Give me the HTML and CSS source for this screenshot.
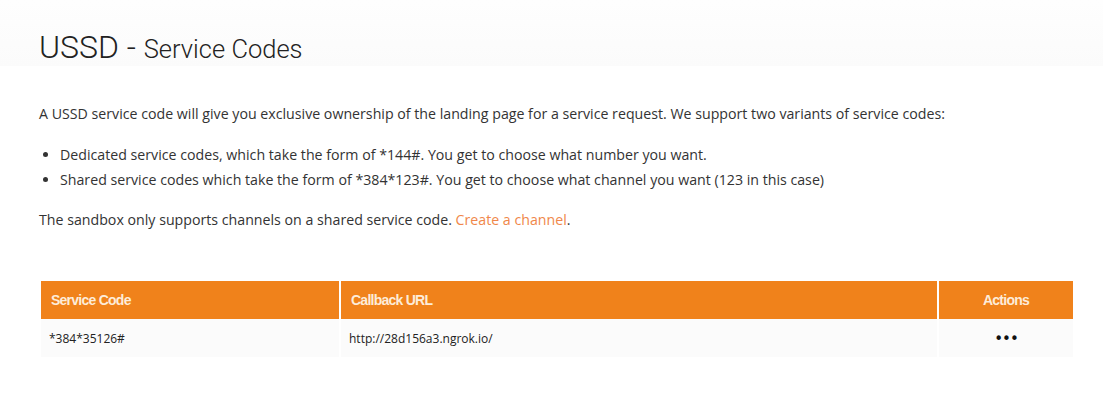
FILE: index.html
```html
<!DOCTYPE html>
<html>
<head>
<meta charset="utf-8">
<link rel="stylesheet" href="styles.css">
</head>
<body>
<div class="top">
  <h1 class="title"><span class="big">USSD - </span>Service Codes</h1>
</div>
<div class="content">
  <p class="intro">A USSD service code will give you exclusive ownership of the landing page for a service request. We support two variants of service codes:</p>
  <ul class="list">
    <li>Dedicated service codes, which take the form of *144#. You get to choose what number you want.</li>
    <li>Shared service codes which take the form of *384*123#. You get to choose what channel you want (123 in this case)</li>
  </ul>
  <p class="note">The sandbox only supports channels on a shared service code. <a class="link" href="#">Create a channel</a>.</p>

  <div class="table">
    <div class="thead">
      <div class="th c1">Service Code</div>
      <div class="th c2">Callback URL</div>
      <div class="th c3">Actions</div>
    </div>
    <div class="trow">
      <div class="td c1">*384*35126#</div>
      <div class="td c2">http://28d156a3.ngrok.io/</div>
      <div class="td c3"><span class="dots">&bull;&bull;&bull;</span></div>
    </div>
  </div>
</div>
</body>
</html>
```
FILE: styles.css
```css
html, body {
  margin: 0;
  padding: 0;
  background: #ffffff;
}
body {
  font-family: "Open Sans", "Noto Sans", sans-serif;
  color: #333333;
}
.top {
  height: 66px;
  background: linear-gradient(#fefefe, #fbfbfb);
  padding: 0 0 0 39px;
  box-sizing: border-box;
}
.title {
  margin: 0;
  padding-top: 29px;
  font-family: Roboto, sans-serif;
  font-weight: 300;
  font-size: 25.5px;
  line-height: 36px;
  color: #222;
}
.title .big {
  font-size: 32px;
}
.content {
  padding: 0 30px 0 39px;
}
.intro {
  margin: 0;
  padding-top: 35px;
  font-size: 14.2px;
  line-height: 25px;
}
.list {
  margin: 16px 0 0 0;
  padding-left: 21px;
  font-size: 14.2px;
  line-height: 25px;
}
.note {
  margin: 15px 0 0 0;
  font-size: 14.2px;
  line-height: 25px;
}
.link {
  color: #f0874a;
  text-decoration: none;
}
.table {
  margin-top: 49px;
  width: 1032px;
  margin-left: 2px;
}
.thead {
  display: flex;
  gap: 2px;
}
.th {
  background: #f0821b;
  color: #fdecd9;
  height: 38px;
  line-height: 38px;
  font-family: "Liberation Sans", Arial, sans-serif;
  font-weight: bold;
  font-size: 14px;
  letter-spacing: -0.75px;
  padding-left: 10px;
  box-sizing: border-box;
}
.c1 { width: 298px; }
.c2 { width: 596px; }
.c3 { width: 134px; }
.th.c3 { text-align: center; padding-left: 0; }
.trow {
  display: flex;
  gap: 2px;
}
.td {
  background: #fbfbfb;
  height: 38px;
  line-height: 40px;
  font-size: 12px;
  padding-left: 8px;
  box-sizing: border-box;
  color: #222;
}
.td.c3 { text-align: center; padding-left: 0; }
.dots {
  font-size: 15px;
  letter-spacing: -1px;
  color: #111;
  font-family: "DejaVu Sans", sans-serif;
}
```
